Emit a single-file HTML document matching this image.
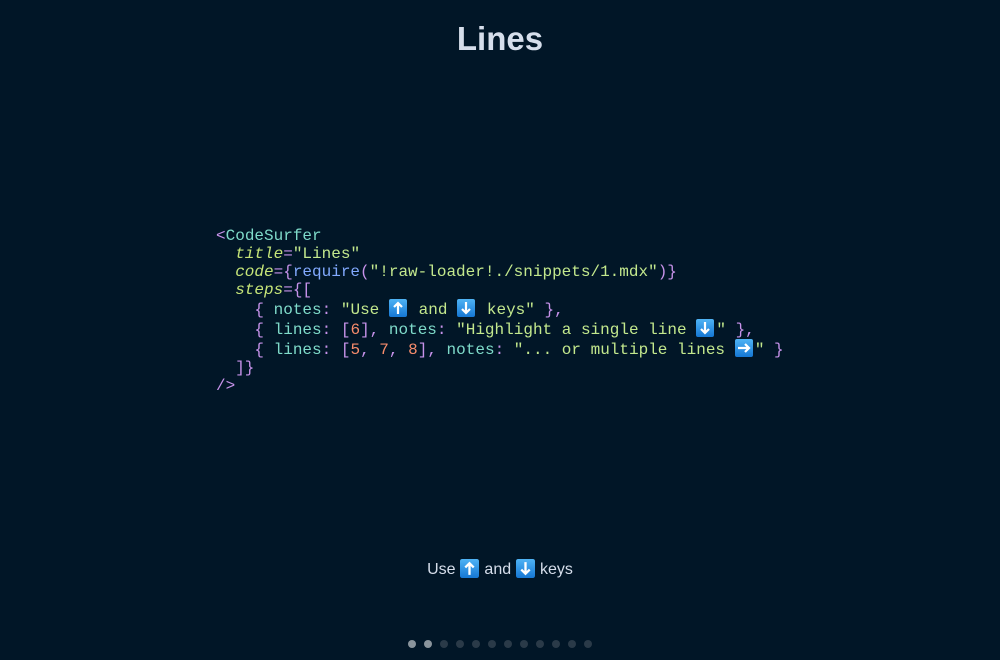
<!DOCTYPE html>
<html><head><meta charset="utf-8"><style>
body{margin:0;width:1000px;height:660px;background:#011627;overflow:hidden;position:relative;font-family:"Liberation Sans",sans-serif}
h1{position:absolute;top:0;left:0;width:1000px;margin:0;text-align:center;font-size:33px;line-height:78px;color:#d6deeb;font-weight:bold}
pre{position:absolute;left:216px;top:227px;margin:0;font-family:"Liberation Mono",monospace;font-size:16px;color:#d6deeb}
.l{height:18px;line-height:18px;white-space:pre}
.e{height:20px;line-height:20px}
.p{color:#c792ea}.t{color:#7fdbca}.a{color:#c5e478;font-style:italic}.s{color:#c3e88d}.f{color:#82aaff}.n{color:#f78c6c}
.em{display:inline-block;width:20.2px;height:18px;vertical-align:-3px;position:relative}
.em svg{position:absolute;left:0;top:0}
.note{position:absolute;top:559px;left:0;width:1000px;text-align:center;color:#d6deeb;font-size:16px;line-height:20px}
.note .em{width:20px}
.dots{position:absolute;top:640px;left:408px}
.dots i{position:absolute;width:8px;height:8px;border-radius:50%;background:#2a3a48;top:0}
</style></head><body>
<h1>Lines</h1>
<svg width="0" height="0" style="position:absolute"><defs>
<linearGradient id="g" x1="0" y1="0" x2="0" y2="1"><stop offset="0" stop-color="#4fb3f5"/><stop offset="1" stop-color="#1577d4"/></linearGradient>
<symbol id="up" viewBox="0 0 18 18"><rect width="18" height="18" rx="2" fill="url(#g)"/><path d="M9 15V4M5 8l4-4 4 4" stroke="#fff" stroke-width="2.2" fill="none"/></symbol>
<symbol id="dn" viewBox="0 0 18 18"><rect width="18" height="18" rx="2" fill="url(#g)"/><path d="M9 3v11M5 10l4 4 4-4" stroke="#fff" stroke-width="2.2" fill="none"/></symbol>
<symbol id="rt" viewBox="0 0 18 18"><rect width="18" height="18" rx="2" fill="url(#g)"/><path d="M3 9h11M10 5l4 4-4 4" stroke="#fff" stroke-width="2.2" fill="none"/></symbol>
</defs></svg>
<pre><div class="l"><span class="p">&lt;</span><span class="t">CodeSurfer</span></div><div class="l">  <span class="a">title</span><span class="p">=</span><span class="s">"Lines"</span></div><div class="l">  <span class="a">code</span><span class="p">={</span><span class="f">require</span><span class="p">(</span><span class="s">"!raw-loader!./snippets/1.mdx"</span><span class="p">)}</span></div><div class="l">  <span class="a">steps</span><span class="p">={[</span></div><div class="l e">    <span class="p">{</span> <span class="t">notes</span><span class="p">:</span> <span class="s">"Use <span class="em"><svg width="18" height="18"><use href="#up"/></svg></span> and <span class="em"><svg width="18" height="18"><use href="#dn"/></svg></span> keys"</span> <span class="p">},</span></div><div class="l e">    <span class="p">{</span> <span class="t">lines</span><span class="p">:</span> <span class="p">[</span><span class="n">6</span><span class="p">],</span> <span class="t">notes</span><span class="p">:</span> <span class="s">"Highlight a single line <span class="em"><svg width="18" height="18"><use href="#dn"/></svg></span>"</span> <span class="p">},</span></div><div class="l e">    <span class="p">{</span> <span class="t">lines</span><span class="p">:</span> <span class="p">[</span><span class="n">5</span><span class="p">,</span> <span class="n">7</span><span class="p">,</span> <span class="n">8</span><span class="p">],</span> <span class="t">notes</span><span class="p">:</span> <span class="s">"... or multiple lines <span class="em"><svg width="18" height="18"><use href="#rt"/></svg></span>"</span> <span class="p">}</span></div><div class="l">  <span class="p">]}</span></div><div class="l"><span class="p">/&gt;</span></div></pre>
<div class="note">Use <span class="em"><svg width="19" height="19"><use href="#up"/></svg></span> and <span class="em"><svg width="19" height="19"><use href="#dn"/></svg></span> keys</div>
<div class="dots">
<i style="left:0;background:#8a949c"></i><i style="left:16px;background:#8a949c"></i><i style="left:32px"></i><i style="left:48px"></i><i style="left:64px"></i><i style="left:80px"></i><i style="left:96px"></i><i style="left:112px"></i><i style="left:128px"></i><i style="left:144px"></i><i style="left:160px"></i><i style="left:176px"></i>
</div>
</body></html>
